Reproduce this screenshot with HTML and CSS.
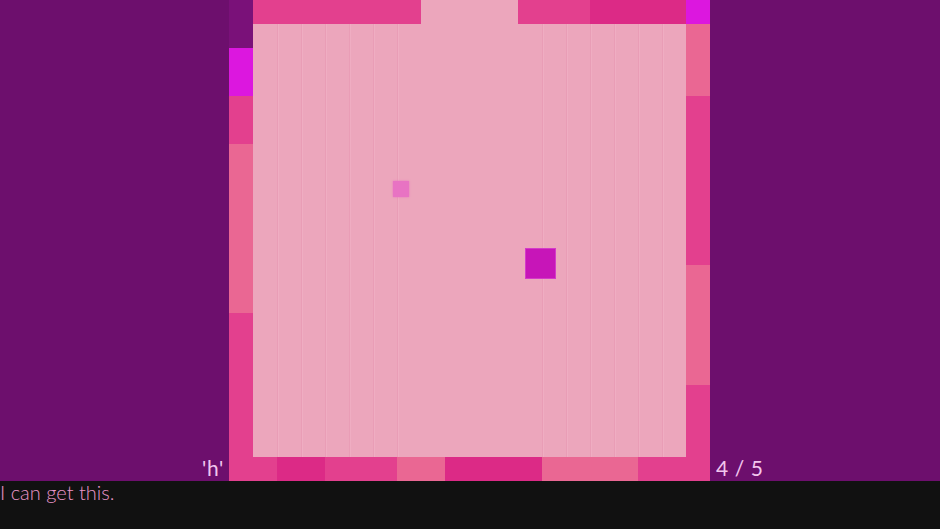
FILE: index.html
```html
<!DOCTYPE html>
<html lang="en">
<head>
    <meta charset="UTF-8">
    <meta name="viewport" content="width=device-width, initial-scale=1.0">
    <title>Level 4</title>
    <link rel="stylesheet" href="styles.css">
</head>
<body>
    <div class="stage">
        <div class="side side-left"><span class="label">'h'</span></div>

        <!-- Board: 20 x 20 cells -->
        <div class="board">
            <div class="lanes lanes-left"></div>
            <div class="lanes lanes-right"></div>

            <!-- top wall -->
            <div class="c-purple" style="grid-area: 1 / 1 / 3 / 2"></div>
            <div class="c-pink" style="grid-area: 1 / 2 / 2 / 9"></div>
            <div class="c-pink" style="grid-area: 1 / 13 / 2 / 16"></div>
            <div class="c-dark" style="grid-area: 1 / 16 / 2 / 20"></div>
            <div class="c-magenta" style="grid-area: 1 / 20 / 2 / 21"></div>

            <!-- left wall -->
            <div class="c-magenta" style="grid-area: 3 / 1 / 5 / 2"></div>
            <div class="c-pink" style="grid-area: 5 / 1 / 7 / 2"></div>
            <div class="c-coral" style="grid-area: 7 / 1 / 14 / 2"></div>
            <div class="c-pink" style="grid-area: 14 / 1 / 20 / 2"></div>

            <!-- right wall -->
            <div class="c-coral" style="grid-area: 2 / 20 / 5 / 21"></div>
            <div class="c-pink" style="grid-area: 5 / 20 / 12 / 21"></div>
            <div class="c-coral" style="grid-area: 12 / 20 / 17 / 21"></div>
            <div class="c-pink" style="grid-area: 17 / 20 / 20 / 21"></div>

            <!-- bottom wall -->
            <div class="c-pink" style="grid-area: 20 / 1 / 21 / 3"></div>
            <div class="c-dark" style="grid-area: 20 / 3 / 21 / 5"></div>
            <div class="c-pink" style="grid-area: 20 / 5 / 21 / 8"></div>
            <div class="c-coral" style="grid-area: 20 / 8 / 21 / 10"></div>
            <div class="c-dark" style="grid-area: 20 / 10 / 21 / 14"></div>
            <div class="c-coral" style="grid-area: 20 / 14 / 21 / 18"></div>
            <div class="c-pink" style="grid-area: 20 / 18 / 21 / 21"></div>

            <div class="pickup"></div>
            <div class="player"></div>
        </div>

        <div class="side side-right"><span class="label">4 / 5</span></div>
    </div>

    <div class="dialog">I can get this.</div>
</body>
</html>
```

FILE: styles.css
```css
body { margin: 0; background: #6d0f6d; font-family: Lato, "Open Sans", sans-serif; overflow: hidden; }
.stage { display: flex; height: 481px; }
.side { flex: 1; display: flex; align-items: flex-end; }
.side-left { justify-content: flex-end; padding-right: 5px; }
.side-right { justify-content: flex-start; padding-left: 6px; }
.label { color: #f2c6ee; font-size: 21px; font-weight: 400; line-height: 24px; padding-bottom: 1px; letter-spacing: 0.6px; }
.board { position: relative; width: 481px; height: 481px; flex: none; display: grid; grid-template-columns: repeat(20, 1fr); grid-template-rows: repeat(20, 1fr); background: #eca6bc; }
.lanes { background: repeating-linear-gradient(90deg, #e99db6 0, #e99db6 1px, #efadc2 1px, #efadc2 2px, transparent 2px, transparent 24.05px); }
.lanes-left { grid-area: 2 / 3 / 20 / 9; }
.lanes-right { grid-area: 2 / 14 / 20 / 20; }
.c-purple { background: #7a1179; }
.c-magenta { background: #dc17df; }
.c-pink { background: #e3408e; }
.c-dark { background: #dc2a86; }
.c-coral { background: #ea6793; }
.pickup { position: absolute; left: 164px; top: 181px; width: 16px; height: 16px; background: #e873c3; box-shadow: 0 0 2px #e873c3; }
.player { position: absolute; left: 296px; top: 248px; width: 29px; height: 29px; background: #c715b8; border: 1px solid #d43bc8; }
.dialog { height: 48px; background: #111111; color: #ea96ca; font-size: 20px; font-weight: 300; line-height: 22px; }
```
